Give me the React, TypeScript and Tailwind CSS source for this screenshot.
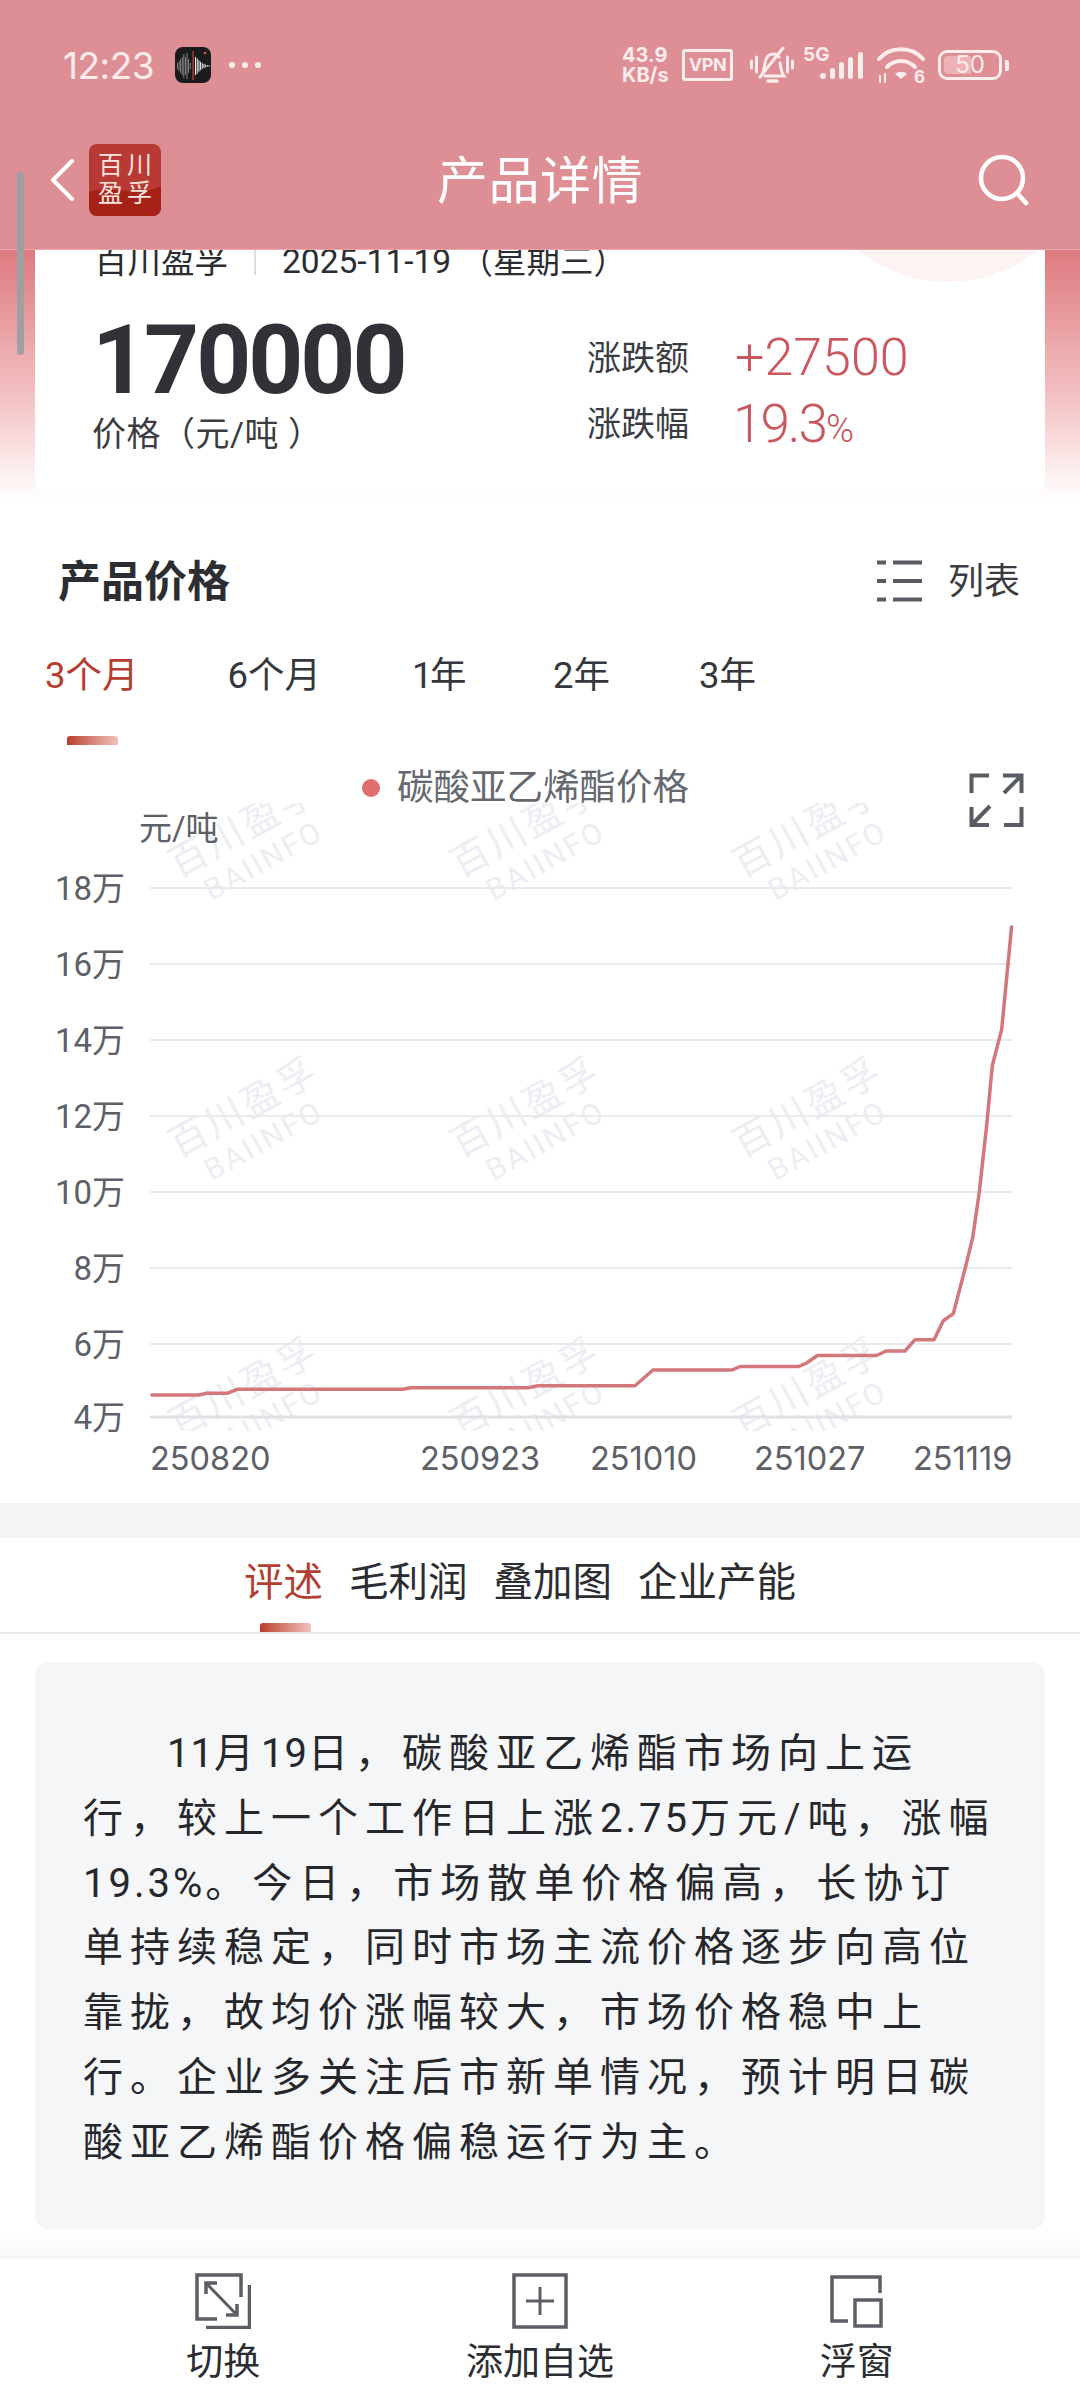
import React from "react";

const LINE: [number, number][] = [
  [150.5, 1395], [199, 1395], [206.6, 1393.3], [227, 1393.3], [237, 1389.3], [403, 1389.3], [410.7, 1387.7],
  [528, 1387.7], [538, 1385.7], [635, 1385.7], [653, 1370], [732, 1370], [740, 1366.6], [798.3, 1366.6],
  [806.7, 1363], [817.3, 1355.5], [876.7, 1355.5], [886, 1351], [905, 1351], [915, 1339.7], [934, 1339.7],
  [943.3, 1320.7], [953.3, 1313.6], [965, 1269], [972.7, 1237.7], [979.3, 1192], [986.7, 1125], [992.3, 1065.8],
  [1001.7, 1029.4], [1011.7, 925.5],
];
const GRID = [
  ["18万", 888], ["16万", 964], ["14万", 1040], ["12万", 1116],
  ["10万", 1192], ["8万", 1268], ["6万", 1344], ["4万", 1417],
] as const;
const XL = [["250820", 150], ["250923", 420], ["251010", 590], ["251027", 754], ["251119", 913]] as const;
const WM: [number, number][] = [];
for (const y of [857, 1137, 1417]) for (const x of [188, 470, 752]) WM.push([x, y]);

function Recorder() {
  const bars = [3, 5, 7, 9, 12, 9, 13, 7, 3];
  const right = [13, 11, 8, 6, 4, 3, 2, 1, 1];
  return (
    <svg width="36" height="36" viewBox="0 0 36 36" className="ml-[21px]">
      <rect width="36" height="36" rx="8" fill="#1b1b1d" />
      {bars.map((h, i) => <rect key={i} x={2 + i * 1.6} y={19 - h} width="0.9" height={h * 2} fill="#8d8d8d" />)}
      <rect x="17.6" y="4" width="1" height="29" fill="#e2553f" />
      {right.map((h, i) => <rect key={i} x={20 + i * 1.7} y={19 - h * 0.7} width="1" height={h * 1.4} fill="#f2f2f2" />)}
      <circle cx="30" cy="6" r="1.3" fill="#e2553f" />
    </svg>
  );
}

function StatusIcons() {
  const c = "#fdecec";
  return (
    <div className="flex items-center h-[40px] mr-[71px] font-['Inter','Noto_Sans_CJK_SC',sans-serif] text-[#fdecec]">
      <div className="w-[60px] text-[20px] leading-[20px] font-bold flex flex-col">
        <span>43.9</span>
        <span>KB/s</span>
      </div>
      <div className="w-[51px] h-[32px] border-[3px] border-[#fdecec] rounded-[3px] flex items-center justify-center text-[18px] font-bold leading-none tracking-[-0.5px]">
        VPN
      </div>
      <svg width="44" height="38" viewBox="0 0 44 38" className="ml-[17px]" fill="none" stroke={c} strokeWidth="3" strokeLinecap="round">
        <path d="M1.5 15v7M6.500 11v15M42.500 15v7M37.500 11v15" />
        <path d="M11 30c3-3 3-7 4-13 1-6 4-9 8-9 3 0 5 1 6 3M30 17c1 6 1 9 4 13H15" />
        <path d="M10 31 33 2" />
        <path d="M18 35h9" strokeWidth="3.500" />
      </svg>
      <div className="relative ml-[9px] w-[61px] h-[38px]">
        <span className="absolute left-0 top-[-1px] text-[19px] leading-[19px] font-bold">5G</span>
        <svg width="44" height="30" viewBox="0 0 44 30" className="absolute left-[17px] top-[5px]" fill={c}>
          <rect x="0" y="22" width="6" height="6" rx="3" />
          <rect x="10" y="17" width="5" height="11" rx="2.500" />
          <rect x="19" y="11" width="5" height="17" rx="2.500" />
          <rect x="28" y="6" width="5" height="22" rx="2.500" />
          <rect x="38" y="1" width="5" height="27" rx="2.500" />
        </svg>
      </div>
      <svg width="48" height="40" viewBox="0 0 48 40" className="ml-[13px]" fill="none" stroke={c} strokeWidth="4" strokeLinecap="round">
        <path d="M2 14C13 1 35 1 46 14" />
        <path d="M10 22c8-8 20-8 28 0" />
        <path d="M18 29c3-3 9-3 12 0l-6 5z" fill={c} stroke="none" />
        <path d="M3 31v6M8 29v8" strokeWidth="2" />
        <text x="37" y="38" fontSize="17" fontWeight="700" fill={c} stroke="none">6</text>
      </svg>
      <div className="ml-[13px] relative w-[64px] h-[30px] border-[3px] border-[#fdecec] rounded-[9px] overflow-hidden flex items-center justify-center">
        <div className="absolute left-[3px] top-[3px] bottom-[3px] w-[27px] bg-[#eeb1b5] rounded-l-[4px]" />
        <span className="relative text-[24px] leading-none font-normal">50</span>
      </div>
      <div className="ml-[3px] w-[4px] h-[11px] bg-[#fdecec] rounded-r-[2px]" />
    </div>
  );
}

function Chart() {
  const grey = "#5d6066";
  return (
    <svg width="1080" height="758" viewBox="0 745 1080 758" className="block font-['Roboto','Noto_Sans_CJK_SC',sans-serif]">
      <defs>
        <clipPath id="wm"><rect x="0" y="803" width="1080" height="628" /></clipPath>
      </defs>
      <g clipPath="url(#wm)" fill="#eceef3">
        {WM.map(([x, y]) => (
          <g key={`${x}-${y}`} transform={`translate(${x} ${y}) rotate(-29)`}>
            <text x="-19" y="14" fontSize="38" letterSpacing="3">百川盈孚</text>
            <text x="-1" y="50" fontSize="30" letterSpacing="2.500">BAIINFO</text>
          </g>
        ))}
      </g>
      <circle cx="371" cy="788" r="9" fill="#de6f6e" />
      <text x="397" y="800" fontSize="36.500" fill="#65686e">碳酸亚乙烯酯价格</text>
      <g fill="none" stroke="#595c62" strokeWidth="4">
        <path d="M971.500 793V775.500H989" />
        <path d="M1003 775.500H1021.500V793M1021.500 775.500L1004 793" />
        <path d="M971.500 807V825H989M971.500 825L990 806" />
        <path d="M1021.500 807V825H1004" />
      </g>
      <text x="139" y="840" fontSize="33" fill={grey}>元/吨</text>
      {GRID.map(([l, y], i) => (
        <g key={l}>
          <line x1="150" x2="1012" y1={y} y2={y} stroke={i === 7 ? "#e0e1e4" : "#e9eaed"} strokeWidth={i === 7 ? 3 : 2} />
          <text x="125" y={y + 12} fontSize="33" textAnchor="end" fill={grey}>{l}</text>
        </g>
      ))}
      <polyline points={LINE.map((p) => p.join(",")).join(" ")} fill="none" stroke="#d4777b" strokeWidth="3.500" strokeLinejoin="round" />
      {XL.map(([l, x]) => (
        <text key={l} x={x} y="1470" fontSize="32.500" fill={grey} className="font-['Inter',sans-serif]">{l}</text>
      ))}
    </svg>
  );
}

export default function App() {
  const ico = "#5c5e65";
  return (
    <div className="relative w-[1080px] h-[2400px] overflow-hidden bg-white flex flex-col font-['Roboto','Noto_Sans_CJK_SC',sans-serif] text-[#2c2d31]">
      <header className="h-[250px] shrink-0 bg-[#de8f95] border-b border-[#eba8ac] text-white">
        <div className="h-[130px] flex items-center justify-between">
          <div className="flex items-center pl-[63px]">
            <span className="text-[37px] leading-none text-[#fdecec] font-['Inter',sans-serif] tracking-[-0.5px]">12:23</span>
            <Recorder />
            <div className="flex gap-[7px] ml-[18px]">
              <i className="w-[6px] h-[6px] rounded-full bg-[#fdecec]" />
              <i className="w-[6px] h-[6px] rounded-full bg-[#fdecec]" />
              <i className="w-[6px] h-[6px] rounded-full bg-[#fdecec]" />
            </div>
          </div>
          <StatusIcons />
        </div>
        <div className="h-[100px] grid grid-cols-[1fr_auto_1fr] items-center">
          <div className="flex items-center pl-[50px]">
            <svg width="24" height="42" viewBox="0 0 24 42" fill="none" stroke="#fff" strokeWidth="4" strokeLinecap="round" strokeLinejoin="round">
              <path d="M22 2 3 21l19 19" />
            </svg>
            <div className="relative ml-[15px] w-[72px] h-[72px] rounded-[8px] overflow-hidden bg-[#b93a34] flex flex-col items-center justify-center text-[25px] leading-[28px] tracking-[4px] text-[#fbe6df] pl-[4px]">
              <svg width="72" height="72" viewBox="0 0 72 72" className="absolute left-0 top-0">
                <path d="M0 48C20 40 50 54 72 42V72H0Z" fill="#a62116" />
              </svg>
              <span className="relative">百川</span>
              <span className="relative">盈孚</span>
            </div>
          </div>
          <h1 className="text-[51px] leading-none font-normal tracking-[0.5px] pt-[2px]">产品详情</h1>
          <div className="flex justify-end pr-[50px]">
            <svg width="52" height="52" viewBox="0 0 52 52" fill="none" stroke="#fff" strokeWidth="4.500" strokeLinecap="round">
              <circle cx="24" cy="24" r="21" />
              <path d="M39 39l9 10" />
            </svg>
          </div>
        </div>
      </header>

      <section className="h-[250px] shrink-0 px-[35px] bg-gradient-to-b from-[#dd7a80] via-[#f3c3c5] via-60% to-white">
        <div className="relative h-[245px] bg-white rounded-b-[14px] overflow-hidden">
          <div className="absolute left-[768px] top-[-258px] w-[290px] h-[290px] rounded-full bg-[#fdf3f3]" />
          <div className="relative -mt-[12px] pl-[59px] h-[48px] flex items-center text-[33.500px] leading-[48px] text-[#2c2d31]">
            <span>百川盈孚</span>
            <span className="mx-[26px] w-[2px] h-[26px] bg-[#dcdde0]" />
            <span>2025-11-19 （星期三）</span>
          </div>
          <div className="relative flex">
            <div className="w-[552px] pl-[57px]">
              <div className="mt-[26px] text-[96px] leading-[96px] font-bold tracking-[-3px] text-[#303237]">170000</div>
              <div className="mt-[2px] text-[34px] leading-[48px] tracking-[0.5px] text-[#3a3c41]">价格（元/吨 ）</div>
            </div>
            <div className="mt-[39px] flex flex-col">
              <div className="flex items-center h-[66px]">
                <span className="w-[148px] text-[34px] text-[#3a3c41]">涨跌额</span>
                <span className="text-[52px] leading-none font-light text-[#c9585e]">+27500</span>
              </div>
              <div className="flex items-center h-[66px]">
                <span className="w-[146px] text-[34px] text-[#3a3c41]">涨跌幅</span>
                <span className="text-[53px] leading-none font-light text-[#c9585e] tracking-[-2px]">19.3<span className="text-[38px]">%</span></span>
              </div>
            </div>
          </div>
        </div>
      </section>

      <section className="shrink-0 bg-white">
        <div className="mt-[41px] h-[82px] pl-[58px] pr-[60px] flex items-center justify-between">
          <h2 className="text-[43px] leading-none font-semibold text-[#2c2d31]">产品价格</h2>
          <div className="flex items-center">
            <svg width="46" height="42" viewBox="0 0 46 42" stroke="#595c62" strokeWidth="4" className="-mt-[2px]">
              <path d="M1 2.500h9M17 2.500h29M1 21h9M17 21h29M1 39.500h9M17 39.500h29" />
            </svg>
            <span className="ml-[26px] text-[36px] leading-none text-[#3a3c41]">列表</span>
          </div>
        </div>
        <div className="mt-[13px] h-[80px] pl-[45px] flex items-center text-[36.500px] leading-none text-[#35373c]">
          <span className="text-[#b23d30]">3个月</span>
          <span className="ml-[89px]">6个月</span>
          <span className="ml-[91px] tracking-[-2.500px]">1年</span>
          <span className="ml-[89px]">2年</span>
          <span className="ml-[89px]">3年</span>
        </div>
        <div className="mt-[20px] ml-[67px] w-[51px] h-[9px] rounded-t-[3px] bg-gradient-to-r from-[#b93a2b] to-[#eec4bf]" />
        <Chart />
      </section>

      <div className="h-[35px] shrink-0 bg-[#f4f5f7]" />

      <section className="shrink-0 border-b-2 border-[#e6e7e9] bg-white">
        <div className="h-[85px] pl-[244px] flex items-end gap-[26px] text-[39.500px] leading-[64px] text-[#2c2d31] pb-[8px]">
          <span className="text-[#b23d30]">评述</span>
          <span>毛利润</span>
          <span>叠加图</span>
          <span>企业产能</span>
        </div>
        <div className="ml-[260px] w-[51px] h-[9px] rounded-t-[3px] bg-gradient-to-r from-[#b93a2b] to-[#eec4bf]" />
      </section>

      <section className="mt-[28px] mx-[35px] h-[568px] shrink-0 bg-[#f5f6f8] rounded-[14px] px-[48px] pt-[60px]">
        <p className="text-[40px] leading-[64.8px] tracking-[7px] text-[#26272b] whitespace-nowrap">
          <span className="pl-[84px]"><span className="tracking-[1px]">11</span>月<span className="tracking-[1px]">19</span>日，碳酸亚乙烯酯市场向上运</span><br />
          行，较上一个工作日上涨<span className="tracking-[3px]">2.75</span>万元/吨，涨幅<br />
          <span className="tracking-[3px]">19.3%</span>。今日，市场散单价格偏高，长协订<br />
          单持续稳定，同时市场主流价格逐步向高位<br />
          靠拢，故均价涨幅较大，市场价格稳中上<br />
          行。企业多关注后市新单情况，预计明日碳<br />
          酸亚乙烯酯价格偏稳运行为主。
        </p>
      </section>

      <div className="h-[29px] shrink-0 bg-gradient-to-b from-white to-[#f7f7f8]" />

      <nav className="h-[141px] shrink-0 bg-white px-[65px] pt-[14px] grid grid-cols-3 text-[37px] leading-[48px] text-[#2c2d31]">
        <div className="flex flex-col items-center">
          <svg width="56" height="56" viewBox="0 0 56 56" fill="none" stroke={ico} strokeWidth="3.500">
            <path d="M22 46H2V2H46V24" />
            <path d="M54.500 12V54.500H11" />
            <path d="M11 10 42 42" strokeWidth="3" />
            <path d="M11 21V10H22M42 31V42H31" />
          </svg>
          <span className="mt-[10px]">切换</span>
        </div>
        <div className="flex flex-col items-center">
          <svg width="56" height="56" viewBox="0 0 56 56" fill="none" stroke={ico} strokeWidth="3.500">
            <rect x="2" y="2" width="52" height="52" />
            <path d="M14 28H42M28 14V42" strokeWidth="3" />
          </svg>
          <span className="mt-[10px]">添加自选</span>
        </div>
        <div className="flex flex-col items-center">
          <svg width="56" height="56" viewBox="0 0 56 56" fill="none" stroke={ico} strokeWidth="3.500">
            <path d="M19 48H3V4H51V20" />
            <rect x="26" y="27" width="26" height="26" />
          </svg>
          <span className="mt-[10px]">浮窗</span>
        </div>
      </nav>

      <div className="absolute left-[17px] top-[172px] w-[7px] h-[183px] rounded-full bg-[#9f9fa1]" />
    </div>
  );
}
